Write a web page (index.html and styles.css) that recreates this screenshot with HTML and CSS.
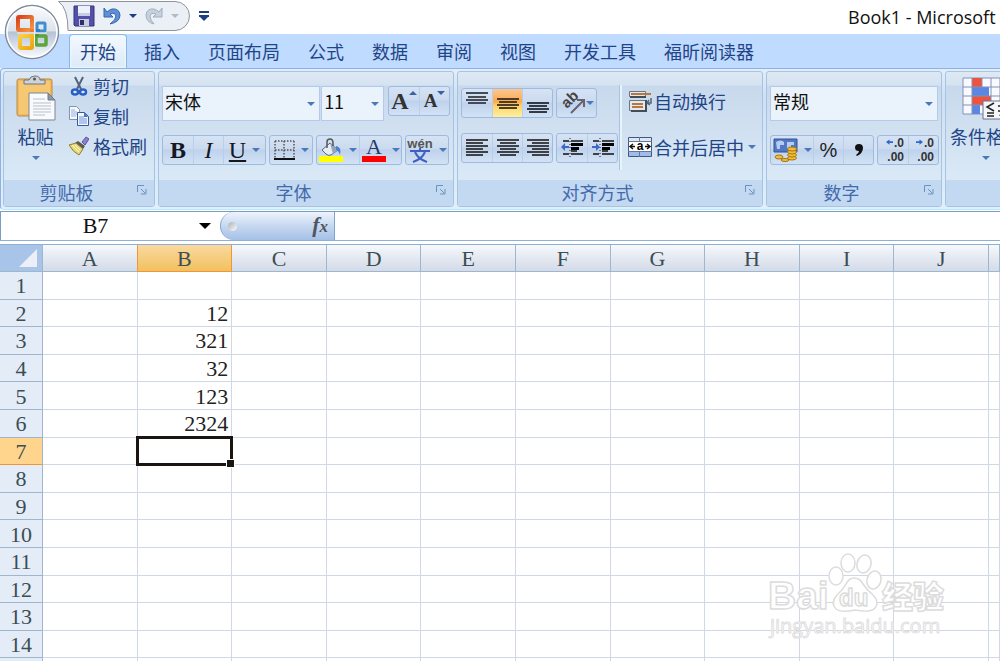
FILE: index.html
```html
<!DOCTYPE html>
<html lang="zh-CN">
<head>
<meta charset="utf-8">
<title>Book1 - Microsoft</title>
<link rel="stylesheet" href="styles.css">
</head>
<body>
<div class="top">
    <button class="office" aria-label="Office">
        <svg width="56" height="56" viewBox="0 0 56 56">
            <defs>
                <linearGradient id="orb" x1="0" y1="0" x2="0" y2="1">
                    <stop offset="0" stop-color="#fbfcfd"/><stop offset=".48" stop-color="#dde3ec"/>
                    <stop offset=".5" stop-color="#b4c2d6"/><stop offset="1" stop-color="#fbfdff"/>
                </linearGradient>
                <linearGradient id="red" x1="0" y1="0" x2="1" y2="1"><stop offset="0" stop-color="#d9421c"/><stop offset="1" stop-color="#f59a42"/></linearGradient>
                <linearGradient id="yel" x1="0" y1="0" x2="1" y2="1"><stop offset="0" stop-color="#fbd03b"/><stop offset="1" stop-color="#eda512"/></linearGradient>
            </defs>
            <circle cx="28" cy="28" r="26.5" fill="url(#orb)" stroke="#7f8a9b" stroke-width="1.5"/>
            <circle cx="28" cy="28" r="25" fill="none" stroke="#fff" stroke-width="1.5"/>
            <g fill="none" stroke-width="4">
                <rect x="14" y="13" width="14" height="13" rx="1" stroke="url(#red)"/>
                <rect x="16" y="32" width="12" height="12" rx="1" stroke="url(#yel)"/>
                <rect x="33" y="19" width="8" height="8" rx="1" stroke="#3f8fd0" stroke-width="3"/>
                <rect x="32" y="32" width="10" height="9" rx="1" stroke="#5da53c" stroke-width="3.5"/>
            </g>
            <path d="M26 25h4v3h-4z" fill="#ef7a35"/><path d="M32 25h4v3h-4z" fill="#2f7fc9"/><path d="M26 30h4v3h-4z" fill="#f5b921"/><path d="M31 30h4v3h-4z" fill="#4f9b35"/>
            <path d="M30.500 14v29M13 29h30" stroke="#eef1f6"/>
        </svg>
    </button>
    <div class="titlebar">
        <div class="quick">
            <svg class="quickbg" width="134" height="32" viewBox="0 0 134 32"><path d="M.5 1.5H117a14.500 14.500 0 0 1 0 29H10Q10 8 .5 1.500Z" fill="#ebf0f6" stroke="#8f9499"/></svg>
            <button aria-label="保存">
                <svg width="22" height="22" viewBox="0 0 22 22"><path d="M1 1h20v20H2l-1-1z" fill="#5450a8" stroke="#35327d"/><path d="M5 1h12v10H5z" fill="#eef1fa"/><path d="M5 8h12v3H5z" fill="#c6cce6"/><path d="M6 14h10v7H6z" fill="#c9cce0"/><path d="M7 15h4v5H7z" fill="#2f2c66"/></svg>
            </button>
            <button aria-label="撤消">
                <svg width="18" height="18" viewBox="0 0 18 18"><path d="M1 1v9h9L7 7q5-2 6 2 0 4-6 8 10-2 10-9-1-7-8-6-3 1-5 3z" fill="#5f8fd6" stroke="#3565ae"/></svg>
            </button>
            <i class="tri dark"></i>
            <button aria-label="恢复">
                <svg width="18" height="18" viewBox="0 0 18 18"><path d="M17 1v9H8l3-3Q6 5 5 9q0 4 4 8-8-2-8-9 1-7 8-6 3 1 5 3z" fill="#c6d1de" stroke="#a2aebd"/></svg>
            </button>
            <i class="tri grey"></i>
            <button class="more" aria-label="自定义快速访问工具栏">
                <svg width="10" height="11" viewBox="0 0 10 11"><path d="M0 0h10v2H0zM0 4h10v2H0zM1 6h8l-4 4z" fill="#1c3f84"/></svg>
            </button>
        </div>
        <div class="title">Book1 - Microsoft</div>
    </div>
    <div class="tabs">
        <a href="#" class="current">开始</a><a href="#">插入</a><a href="#">页面布局</a><a href="#">公式</a><a href="#">数据</a><a href="#">审阅</a><a href="#">视图</a><a href="#">开发工具</a><a href="#">福昕阅读器</a>
    </div>
</div>

<div class="ribbon">
    <div class="group clip">
        <div class="body">
            <button class="big">
                <svg width="42" height="46" viewBox="0 0 42 46">
                    <rect x="2" y="4" width="35" height="37" rx="2" fill="#f0b95b" stroke="#b98b48"/>
                    <path d="M4 6h31v33H4z" fill="#f6c873"/>
                    <path d="M9 5h5q1-4 6-4t5 4h5v4H9z" fill="#cfd3da" stroke="#70757f"/><circle cx="19.500" cy="4" r="1.500" fill="#555"/>
                    <path d="M14 18h19l7 7v20H14z" fill="#f8fafd" stroke="#7c8796"/>
                    <path d="M33 18v7h7z" fill="#8a97a8" stroke="#717d8e"/>
                    <path d="M18 24h12M18 28h18M18 31h18M18 34h18M18 37h18M18 40h12" stroke="#b9c1cc"/>
                </svg>
                <span>粘贴</span><i class="tri"></i>
            </button>
            <div class="list">
                <button>
                    <svg width="20" height="20" viewBox="0 0 20 20"><path d="M6 1l6 12M14 1L8 13" stroke="#53647d" stroke-width="2"/><g fill="#dce8fb" stroke="#2a5fc4" stroke-width="2.500"><ellipse cx="6" cy="16" rx="3" ry="2.500"/><ellipse cx="14" cy="16" rx="3" ry="2.500"/></g></svg>剪切</button>
                <button>
                    <svg width="20" height="20" viewBox="0 0 20 20"><g fill="#f4f8ff"><path d="M.5 .5h7l3 3v10H.5z" stroke="#8493ab"/><path d="M8.500 6.500h7l4 4v9h-11z" stroke="#3559a8"/></g><path d="M2 4h4M2 6h6M2 8h6M2 10h5" stroke="#9ab0d8"/><path d="M10 11h5M10 13h8M10 15h8M10 17h8" stroke="#6f93d8"/><path d="M15 6v5h4z" fill="#4a74c0"/></svg>复制</button>
                <button>
                    <svg width="20" height="20" viewBox="0 0 20 20"><path d="M13 6l4-5 3 2-4 6z" fill="#8a7fd0" stroke="#5c52a0"/><path d="M9 5l7 5-2 3-8-6z" fill="#5a5a4f"/><path d="M7 7l7 6-4 6Q4 16 0 9z" fill="#e8d877" stroke="#8c7d35"/><path d="M3 9l7 7M6 9l5 5" stroke="#fffbd0"/></svg>格式刷</button>
            </div>
        </div>
        <div class="label"><span>剪贴板</span><svg class="launch" width="10" height="10" viewBox="0 0 10 10"><path d="M.5 7V.5H7M4 4l4 4M9 4v5H4" fill="none" stroke="#6b93c0"/></svg></div>
    </div>

    <div class="group font">
        <div class="body rows">
            <div class="row">
                <div class="combo name"><select aria-label="字体"><option>宋体</option></select></div>
                <div class="combo size"><select aria-label="字号"><option>11</option></select></div>
                <div class="btns gap">
                    <button class="serif grow">A<i class="up"></i></button>
                    <button class="serif shrink">A<i class="down"></i></button>
                </div>
            </div>
            <div class="row">
                <div class="btns">
                    <button class="serif"><b>B</b></button>
                    <button class="serif"><em>I</em></button>
                    <button class="serif wide"><u>U</u><i class="tri"></i></button>
                </div>
                <div class="btns">
                    <button class="drop" aria-label="边框"><svg width="21" height="21" viewBox="0 0 21 21"><path d="M1 1h19M1 10h19M1 1v17M10 1v17M20 1v17" stroke="#555" stroke-width="1.500" stroke-dasharray="1.500 1.500"/><path d="M0 19h21" stroke="#111" stroke-width="2"/></svg><i class="tri"></i></button>
                </div>
                <div class="btns">
                    <button class="drop" aria-label="填充颜色"><svg width="24" height="24" viewBox="0 0 24 24"><path d="M3 12l8-7 8 7-7 5q-3 1-5-1z" fill="#e7edf5" stroke="#57677e"/><path d="M11 5l8 7-5 4z" fill="#91a6c3"/><path d="M8 10V4q0-3 3-3t3 4v3" fill="none" stroke="#555" stroke-width="1.500"/><path d="M17 8q6 1 4 9-2-5-4-5z" fill="#4a7fcf"/><path d="M0 18h24v6H0z" fill="#ff0"/></svg><i class="tri"></i></button>
                    <button class="drop" aria-label="字体颜色"><svg width="24" height="24" viewBox="0 0 24 24"><text x="12" y="16" text-anchor="middle" font-family="Liberation Serif,serif" font-size="22" fill="#263c6c">A</text><path d="M0 18h24v6H0z" fill="#f00"/></svg><i class="tri"></i></button>
                </div>
                <div class="btns">
                    <button class="drop" aria-label="拼音指南"><svg width="26" height="28" viewBox="0 0 26 28"><text x="13" y="12" text-anchor="middle" font-family="Liberation Sans,sans-serif" font-weight="bold" font-size="13" fill="#555">wén</text><path d="M3 15h20M13 12v3M8 16q3 7 12 10M18 16q-3 7-12 10" fill="none" stroke="#3f5fc4" stroke-width="2"/></svg><i class="tri"></i></button>
                </div>
            </div>
        </div>
        <div class="label"><span>字体</span><svg class="launch" width="10" height="10" viewBox="0 0 10 10"><path d="M.5 7V.5H7M4 4l4 4M9 4v5H4" fill="none" stroke="#6b93c0"/></svg></div>
    </div>

    <div class="group align">
        <div class="body">
            <div class="rows">
                <div class="row">
                    <div class="btns">
                        <button aria-label="顶端对齐"><svg width="22" height="26" viewBox="0 0 22 26"><path d="M0 3h22M2 7h18M0 10h22M2 13h18" stroke="#444b57" stroke-width="2"/></svg></button>
                        <button class="on" aria-label="垂直居中"><svg width="22" height="26" viewBox="0 0 22 26"><path d="M0 9h22M2 12h18M0 15h22M2 18h18" stroke="#4c3d24" stroke-width="2"/></svg></button>
                        <button aria-label="底端对齐"><svg width="22" height="26" viewBox="0 0 22 26"><path d="M0 13h22M2 16h18M0 19h22M2 22h18" stroke="#333a46" stroke-width="2"/></svg></button>
                    </div>
                    <div class="btns">
                        <button class="drop" aria-label="方向"><svg width="26" height="26" viewBox="0 0 26 26"><text x="8" y="19" transform="rotate(-45 8 19)" font-family="Liberation Sans,sans-serif" font-weight="bold" font-size="15" fill="#444">ab</text><path d="M12 23L24 11M18 10h7v7" fill="none" stroke="#6b6270" stroke-width="2"/></svg><i class="tri"></i></button>
                    </div>
                </div>
                <div class="row">
                    <div class="btns">
                        <button aria-label="文本左对齐"><svg width="22" height="20" viewBox="0 0 22 20"><path d="M0 2h22M0 5h17M0 8h22M0 11h17M0 14h22M0 17h17" stroke="#111" stroke-width="1.500"/></svg></button>
                        <button aria-label="居中"><svg width="22" height="20" viewBox="0 0 22 20"><path d="M0 2h22M3 5h16M0 8h22M3 11h16M0 14h22M3 17h16" stroke="#111" stroke-width="1.500"/></svg></button>
                        <button aria-label="文本右对齐"><svg width="22" height="20" viewBox="0 0 22 20"><path d="M0 2h22M5 5h17M0 8h22M5 11h17M0 14h22M5 17h17" stroke="#111" stroke-width="1.500"/></svg></button>
                    </div>
                    <div class="btns">
                        <button aria-label="减少缩进量"><svg width="22" height="20" viewBox="0 0 22 20"><path d="M2 3h6M10 3h12M2 16h6M10 16h12M10 13h6" stroke="#111" stroke-width="1.500"/><path d="M9 0v20" stroke="#111" stroke-dasharray="1 2"/><path d="M10 5h12v3H10zM10 9h8v3h-8z"/><path d="M0 9l4-4v3h4v2H4v3z" fill="#3c68cc"/></svg></button>
                        <button aria-label="增加缩进量"><svg width="22" height="20" viewBox="0 0 22 20"><path d="M1 3h6M10 3h12M1 16h6M10 16h12M10 13h6" stroke="#111" stroke-width="1.500"/><path d="M8 0v20" stroke="#111" stroke-dasharray="1 2"/><path d="M10 5h12v3H10zM10 9h8v3h-8z"/><path d="M8 9L4 5v3H0v2h4v3z" fill="#3c68cc"/></svg></button>
                    </div>
                </div>
            </div>
            <div class="list sep">
                <button>
                    <svg width="24" height="24" viewBox="0 0 24 24"><path d="M1.500 2.500h16v5h-16zM1.500 11.500h16v10h-16z" fill="#e4e8ef" stroke="#6b7685"/><path d="M18 8H2M18 11v11H3" fill="none" stroke="#444d5a" stroke-width="2"/><path d="M3 5h20M4 15h11M4 18h11" stroke="#b9793a" stroke-width="2"/><path d="M23 9v5h-4M21 11l-2 3 3 2" fill="none" stroke="#56657a" stroke-width="1.500"/></svg>自动换行</button>
                <button>
                    <svg width="24" height="20" viewBox="0 0 24 20"><path d="M.5 .5h23v19H.5z" fill="#dce6f5" stroke="#44587a"/><path d="M1 15h22v4H1z" fill="#9fbdec"/><path d="M0 4.500h24M0 14.500h24M11.500 0v4M11.500 15v5" stroke="#62779b"/><path d="M1 5h22v9H1z" fill="#fff"/><text x="12" y="13" text-anchor="middle" font-family="Liberation Sans,sans-serif" font-weight="bold" font-size="12">a</text><path d="M2 9.500h5M17 9.500h5M5 7L2 9.500 5 12M19 7l3 2.500-3 2.500" fill="none" stroke="#111" stroke-width="1.500"/></svg>合并后居中<i class="tri"></i></button>
            </div>
        </div>
        <div class="label"><span>对齐方式</span><svg class="launch" width="10" height="10" viewBox="0 0 10 10"><path d="M.5 7V.5H7M4 4l4 4M9 4v5H4" fill="none" stroke="#6b93c0"/></svg></div>
    </div>

    <div class="group number">
        <div class="body rows">
            <div class="row">
                <div class="combo format"><select aria-label="数字格式"><option>常规</option></select></div>
            </div>
            <div class="row">
                <div class="btns">
                    <button class="drop" aria-label="会计数字格式"><svg width="25" height="24" viewBox="0 0 25 24"><path d="M1 1h23v13H1z" fill="#5078c4" stroke="#315396"/><path d="M3 4q5-3 8 0v3H7v4H4zM14 4h7v3h-3v3h-4z" fill="#b7cdf0"/><g fill="#f1bd35" stroke="#a87516"><ellipse cx="19" cy="20" rx="4.500" ry="2"/><ellipse cx="19" cy="17" rx="4.500" ry="2"/><ellipse cx="19" cy="14" rx="4.500" ry="2"/><ellipse cx="19" cy="11" rx="4.500" ry="2"/><ellipse cx="6" cy="19" rx="4" ry="2"/><ellipse cx="12" cy="22" rx="4" ry="1.500"/></g></svg><i class="tri"></i></button>
                    <button class="percent">%</button>
                    <button class="comma" aria-label="千位分隔样式"><svg width="8" height="12" viewBox="0 0 8 12"><path d="M4 0q4 0 4 4 0 5-6 8l-1-1q3-2 3-4-4 0-4-3.500Q0 0 4 0z" fill="#111"/></svg></button>
                </div>
                <div class="btns">
                    <button class="dec"><svg width="7" height="6" viewBox="0 0 8 6"><path d="M0 3l4-3v2h4v2H4v2z" fill="#2c65cc"/></svg>.0<br>.00</button>
                    <button class="dec"><svg width="7" height="6" viewBox="0 0 8 6"><path d="M8 3L4 0v2H0v2h4v2z" fill="#2c65cc"/></svg>.0<br>.00</button>
                </div>
            </div>
        </div>
        <div class="label"><span>数字</span><svg class="launch" width="10" height="10" viewBox="0 0 10 10"><path d="M.5 7V.5H7M4 4l4 4M9 4v5H4" fill="none" stroke="#6b93c0"/></svg></div>
    </div>

    <div class="group styles">
        <div class="body">
            <button class="big">
                <svg width="48" height="46" viewBox="0 0 48 46"><path d="M1 3h46v36H1z" fill="#f8faff" stroke="#8292b4"/><path d="M10 3h10v9H10zM10 21h19v9H10z" fill="#ee5340"/><path d="M10 12h17v9H10zM10 30h8v9h-8z" fill="#5b86e2"/><path d="M1 12h46M1 21h46M1 30h46M10 3v36M20 3v9M29 3v27M38 3v36" stroke="#8292b4" fill="none"/><path d="M21 26h26v18H21z" fill="#f4f6fa" stroke="#6a7486"/><path d="M32 28l-7 4 7 4M25 38h7M25 41h7M36 31h9M36 36h9M43 28l-5 13" fill="none" stroke="#222" stroke-width="1.500"/></svg>
                <span>条件格式</span><i class="tri"></i>
            </button>
        </div>
        <div class="label"></div>
    </div>
</div>

<div class="formula">
    <div class="namebox"><input type="text" value="B7" aria-label="名称框"><i class="tri"></i></div>
    <div class="fx"><span class="dot"></span><button><em>f</em><em class="x">x</em></button></div>
    <input class="edit" type="text" aria-label="编辑栏">
</div>

<div class="sheet">
<table>
<thead>
<tr><th class="all"><svg width="20" height="20" viewBox="0 0 20 20"><path d="M19 1v18H1z" fill="#eceff5"/></svg></th><th>A</th><th class="sel">B</th><th>C</th><th>D</th><th>E</th><th>F</th><th>G</th><th>H</th><th>I</th><th>J</th><th class="last"></th></tr>
</thead>
<tbody>
<tr><th>1</th><td></td><td></td><td></td><td></td><td></td><td></td><td></td><td></td><td></td><td></td><td></td></tr>
<tr><th>2</th><td></td><td>12</td><td></td><td></td><td></td><td></td><td></td><td></td><td></td><td></td><td></td></tr>
<tr><th>3</th><td></td><td>321</td><td></td><td></td><td></td><td></td><td></td><td></td><td></td><td></td><td></td></tr>
<tr><th>4</th><td></td><td>32</td><td></td><td></td><td></td><td></td><td></td><td></td><td></td><td></td><td></td></tr>
<tr><th>5</th><td></td><td>123</td><td></td><td></td><td></td><td></td><td></td><td></td><td></td><td></td><td></td></tr>
<tr><th>6</th><td></td><td>2324</td><td></td><td></td><td></td><td></td><td></td><td></td><td></td><td></td><td></td></tr>
<tr><th class="sel">7</th><td></td><td class="active"></td><td></td><td></td><td></td><td></td><td></td><td></td><td></td><td></td><td></td></tr>
<tr><th>8</th><td></td><td></td><td></td><td></td><td></td><td></td><td></td><td></td><td></td><td></td><td></td></tr>
<tr><th>9</th><td></td><td></td><td></td><td></td><td></td><td></td><td></td><td></td><td></td><td></td><td></td></tr>
<tr><th>10</th><td></td><td></td><td></td><td></td><td></td><td></td><td></td><td></td><td></td><td></td><td></td></tr>
<tr><th>11</th><td></td><td></td><td></td><td></td><td></td><td></td><td></td><td></td><td></td><td></td><td></td></tr>
<tr><th>12</th><td></td><td></td><td></td><td></td><td></td><td></td><td></td><td></td><td></td><td></td><td></td></tr>
<tr><th>13</th><td></td><td></td><td></td><td></td><td></td><td></td><td></td><td></td><td></td><td></td><td></td></tr>
<tr><th>14</th><td></td><td></td><td></td><td></td><td></td><td></td><td></td><td></td><td></td><td></td><td></td></tr>
<tr><th></th><td></td><td></td><td></td><td></td><td></td><td></td><td></td><td></td><td></td><td></td><td></td></tr>
</tbody>
</table>
<svg class="mark" width="184" height="90" viewBox="0 0 184 90">
    <g fill="#fff" stroke="#dcdcdc" stroke-width="1.500" stroke-linejoin="round" font-family="Liberation Sans,Noto Sans CJK SC,sans-serif" font-weight="bold">
        <ellipse cx="70" cy="25" rx="7" ry="9"/>
        <ellipse cx="82" cy="12" rx="7" ry="9"/>
        <ellipse cx="98" cy="13" rx="7" ry="9" transform="rotate(15 98 13)"/>
        <ellipse cx="108" cy="29" rx="7" ry="9" transform="rotate(15 108 29)"/>
        <path d="M88 27q6 0 9 6 4 6 10 11 7 7 2 13-4 5-20 2-14 3-19-1-6-6 1-14 6-5 9-11 3-6 8-6z"/>
        <text x="2" y="58" font-size="39">Bai</text>
        <text x="73" y="55" font-size="24">du</text>
        <text x="116" y="57" font-size="31" font-weight="900">经验</text>
    </g>
    <text x="4" y="82" font-size="20" font-family="Open Sans,sans-serif" fill="#fff" stroke="#dfdfdf" stroke-width="1">jingyan.baidu.com</text>
</svg>
</div>
</body>
</html>
```
FILE: styles.css
```css
*{
	margin:0;
	padding:0;
	box-sizing:border-box;
}
body{
	height:100vh;
	display:flex;
	flex-direction:column;
	overflow:hidden;
	background:#fff;
	font:18px/24px "Noto Sans CJK SC",sans-serif;
	color:#1f4587;
}
button,select,input{
	font:inherit;
	color:inherit;
	border:0;
	background:none;
}
button svg{
	display:block;
	flex:none;
}
.tri{
	flex:none;
	border:4px solid transparent;
	border-top-color:#4a78b8;
	border-bottom:0;
}
.tri.dark{
	border-top-color:#1c3f84;
}
.tri.grey{
	border-top-color:#b4b9c0;
}

/* 标题栏和选项卡 */
.top{
	position:relative;
	flex:none;
}
.office{
	position:absolute;
	left:4px;
	top:4px;
	z-index:2;
}
.titlebar{
	height:34px;
	display:flex;
	justify-content:space-between;
	overflow:hidden;
	padding-left:58px;
}
.quick{
	position:relative;
	flex:none;
	height:32px;
	display:flex;
	align-items:center;
	gap:8px;
	padding-left:15px;
}
.quickbg{
	position:absolute;
	left:0;
	top:0;
}
.quick button,.quick .tri{
	position:relative;
}
.quick .more{
	margin-left:12px;
}
.title{
	flex:none;
	width:152px;
	white-space:nowrap;
	font:18px/34px "Open Sans","Noto Sans",sans-serif;
	color:#111;
}
.tabs{
	height:34px;
	display:flex;
	align-items:flex-end;
	background:#bfdbff;
	padding-left:66px;
	overflow:hidden;
}
.tabs a{
	flex:none;
	height:34px;
	padding:0 14px;
	line-height:34px;
	color:#1f4587;
	text-decoration:none;
}
.tabs .current{
	margin:0 3px;
	padding:0 10px;
	line-height:32px;
	border:1px solid #8fb5e4;
	border-bottom:0;
	border-radius:4px 4px 0 0;
	background:linear-gradient(#f4f9ff,#dce9f8);
	box-shadow:inset 0 0 2px 1px #e6fbff;
}

/* 功能区 */
.ribbon{
	flex:none;
	display:flex;
	gap:3px;
	padding:2px 0 2px 2px;
	overflow:hidden;
	border:1px solid #8db2e3;
	border-right:0;
	border-bottom-color:#b8ecf8;
	border-radius:4px 0 0 4px;
	background:linear-gradient(#e2edf9,#cfe0f4 20%,#e0effa);
}
.group{
	flex:none;
	display:flex;
	flex-direction:column;
	border:1px solid #a6c3e2;
	border-radius:3px;
	background:linear-gradient(#dfe9f5,#d5e2f1 13px,#c8d9ed 14px,#dae9f6 109px);
}
.body{
	height:108px;
	display:flex;
	padding:0 3px;
}
.label{
	height:26px;
	display:flex;
	align-items:center;
	justify-content:center;
	background:#c2d9f1;
	color:#4469ab;
	padding:0 7px 2px 0;
}
.label span{
	flex:1;
	text-align:center;
	padding-right:8px;
}
.launch{
	flex:none;
	margin-bottom:4px;
}
.clip{
	width:152px;
}
.font{
	width:296px;
}
.align{
	width:306px;
}
.number{
	width:176px;
}
.styles{
	width:86px;
}
.big{
	display:flex;
	flex-direction:column;
	align-items:center;
	padding-top:3px;
	white-space:nowrap;
}
.big span{
	margin:3px 0 8px;
}
.clip .big{
	width:57px;
	margin-right:5px;
}
.styles .big{
	width:74px;
}
.list{
	display:flex;
	flex-direction:column;
	gap:6px;
	padding-top:2px;
}
.list button{
	display:flex;
	align-items:center;
	gap:4px;
	height:24px;
	white-space:nowrap;
}
.sep{
	gap:22px;
	margin:13px 0 10px 2px;
	padding:4px 0 0 6px;
	border-left:2px solid #e9f3fc;
	box-shadow:-1px 0 #a9c3e3;
}
.sep button{
	gap:2px;
}
.sep .tri{
	margin-left:2px;
}
.rows{
	display:flex;
	flex-direction:column;
	gap:14px;
	padding-top:14px;
}
.row{
	display:flex;
	align-items:flex-start;
	gap:3px;
	height:35px;
}
.font .row:first-child{
	gap:1px;
}
.gap{
	margin-left:3px;
}
.align .rows{
	gap:10px;
	padding-top:16px;
}
.combo{
	position:relative;
	height:35px;
	border:1px solid #b3cbe8;
	background:#eaf2fb;
	color:#111;
}
.combo select{
	appearance:none;
	width:100%;
	height:28px;
	padding-left:2px;
	outline:0;
}
.combo:after{
	content:"";
	position:absolute;
	right:4px;
	top:15px;
	border:4px solid transparent;
	border-top-color:#4a78b8;
	border-bottom:0;
	pointer-events:none;
}
.name{
	width:161px;
}
.size{
	width:64px;
}
.format{
	width:168px;
}
.btns{
	display:flex;
	height:30px;
	border:1px solid #9ebbdf;
	border-radius:3px;
	background:linear-gradient(#d6e3f4,#cbdaef 45%,#bfd2ec 50%,#d2e2f5);
}
.btns button{
	display:flex;
	align-items:center;
	justify-content:center;
	gap:6px;
	width:30px;
	border-left:1px solid #b9cee9;
}
.btns button:first-child{
	border-left:0;
}
.btns .drop{
	width:42px;
}
.btns .wide{
	width:42px;
}
.btns .serif{
	font:24px/28px "Liberation Serif",serif;
	color:#15181f;
}
.btns .grow,.btns .shrink{
	gap:0;
	font-weight:bold;
	color:#333;
}
.btns .shrink{
	font-size:19px;
}
.up,.down{
	align-self:flex-start;
	margin-top:4px;
	border:4px solid transparent;
}
.up{
	border-bottom-color:#3c5fa5;
	border-top:0;
}
.down{
	border-top-color:#3c5fa5;
	border-bottom:0;
}
.btns .on{
	background:linear-gradient(#fbc795,#fda94f 45%,#fdd468 60%,#fff0a0);
}
.align .drop{
	width:39px;
	gap:1px;
}
.btns .percent,.btns .comma{
	font:20px/28px "Liberation Sans",sans-serif;
	color:#222;
}
.btns .dec{
	display:block;
	font:bold 12px/14px "Liberation Sans",sans-serif;
	color:#333;
	text-align:right;
	padding-right:4px;
}
.dec svg{
	display:inline-block;
	vertical-align:2px;
	margin-right:1px;
}

/* 编辑栏 */
.formula{
	flex:none;
	display:flex;
	height:30px;
	margin-top:1px;
	border-top:1px solid #7b9cc6;
	border-bottom:1px solid #8fb0d4;
}
.namebox{
	width:217px;
	display:flex;
	align-items:center;
	padding-right:6px;
	border-left:1px solid #7b9cc6;
}
.namebox input{
	flex:1;
	min-width:0;
	text-align:center;
	font:22px/28px "Liberation Serif",serif;
	color:#111;
	padding-right:9px;
}
.namebox .tri{
	border-width:6px 6px 0;
	border-top-color:#000;
}
.fx{
	width:115px;
	margin-left:3px;
	display:flex;
	align-items:center;
	justify-content:space-between;
	padding:0 6px 0 7px;
	border:1px solid #7fa5cf;
	border-top:0;
	border-bottom:0;
	border-radius:15px 0 0 15px;
	background:linear-gradient(#eef4fc,#c6d8f0 50%,#a5c0e6);
}
.dot{
	width:9px;
	height:9px;
	border-radius:50%;
	background:linear-gradient(135deg,#a9adb6,#fff);
}
.fx button{
	font:bold 22px/28px "Liberation Serif",serif;
	color:#50565f;
}
.fx .x{
	font-size:17px;
}
.edit{
	flex:1;
	min-width:0;
	padding:0 6px;
}

/* 工作表 */
.sheet{
	position:relative;
	flex:1;
	min-height:0;
	margin-top:3px;
	border-top:1px solid #8fb0d4;
	overflow:hidden;
}
table{
	table-layout:fixed;
	width:100%;
	height:441px;
	border-collapse:separate;
	border-spacing:0;
	font:22px/24px "Liberation Serif",serif;
	color:#222;
}
tr{
	height:27px;
}
th{
	font-weight:normal;
	color:#3b4e54;
	border-right:1px solid #9eb6ce;
	border-bottom:1px solid #9eb6ce;
	background:#e4ecf7;
}
tbody th,td{
	padding-top:2px;
}
thead th{
	background:linear-gradient(#f6f9fc,#e4e9f1 50%,#d3dbe9);
	padding-top:2px;
}
thead .all{
	width:43px;
	padding:0 4px 0 0;
	background:#a9c4e9;
}
.all svg{
	display:block;
	margin-left:auto;
}
.last{
	width:11px;
}
td{
	text-align:right;
	padding-right:3px;
	border-right:1px solid #d0d7e5;
	border-bottom:1px solid #d0d7e5;
}
tbody .sel{
	background:#ffd58d;
	border-bottom-color:#f29536;
}
thead .sel{
	background:linear-gradient(#f9d99f,#f1c15f);
	border-color:#f29536;
	box-shadow:-1px 0 #f29536;
}
.active{
	position:relative;
}
.active:before{
	content:"";
	position:absolute;
	top:-2px;
	right:-2px;
	bottom:-2px;
	left:-2px;
	border:3px solid #1b1512;
}
.active:after{
	content:"";
	position:absolute;
	right:-4px;
	bottom:-4px;
	width:7px;
	height:7px;
	border:1px solid #fff;
	background:#1b1512;
}
.mark{
	position:absolute;
	right:50px;
	bottom:20px;
}
```
